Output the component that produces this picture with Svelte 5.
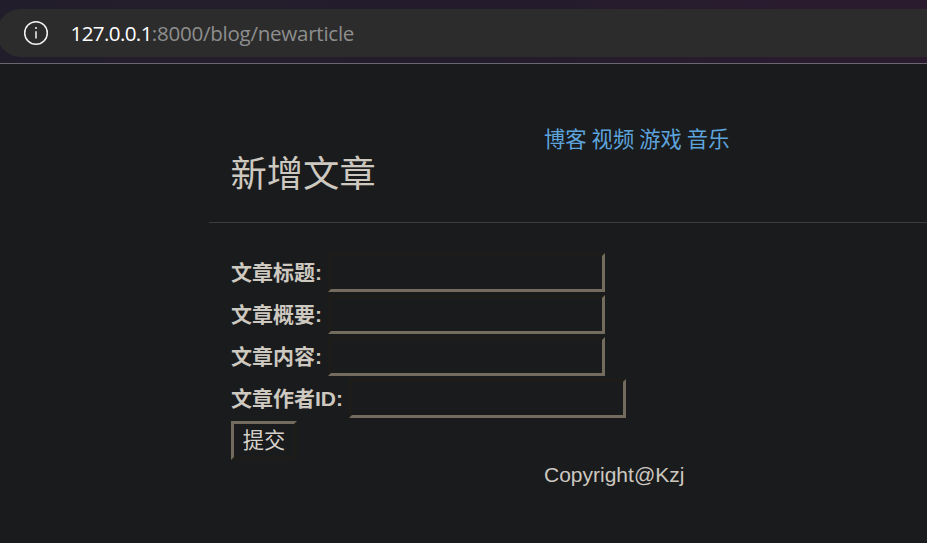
<script>
  const links = ['博客', '视频', '游戏', '音乐'];
  const fields = [
    { id: 'title', label: '文章标题:' },
    { id: 'summary', label: '文章概要:' },
    { id: 'content', label: '文章内容:' },
    { id: 'author', label: '文章作者ID:', wide: true }
  ];
</script>

<div class="window">
  <header class="toolbar">
    <div class="address">
      <svg class="info" width="26" height="26" viewBox="0 0 26 26" fill="none" aria-hidden="true">
        <circle cx="13" cy="13" r="11.3" stroke="#f4f4f4" stroke-width="1.5" />
        <path d="M13 11.3v7.2" stroke="#e6e6e6" stroke-width="1.6" />
        <circle cx="13" cy="8" r="1.1" fill="#e6e6e6" />
      </svg>
      <span class="url"><span class="host">127.0.0.1</span><span class="path">:8000/blog/newarticle</span></span>
    </div>
  </header>
  <main>
    <nav>
      {#each links as link}<a href="#top">{link}</a>{/each}
    </nav>
    <h1>新增文章</h1>
    <form onsubmit={(e) => e.preventDefault()}>
      {#each fields as f}
        <div class="row">
          <label for={f.id} class:wide={f.wide}>{f.label}</label>
          <input id={f.id} type="text" />
        </div>
      {/each}
      <button type="submit">提交</button>
    </form>
    <footer>Copyright@Kzj</footer>
  </main>
</div>

<style>
  :global(body) {
    margin: 0;
    background: #1a1b1c;
  }
  .window {
    width: 927px;
    height: 543px;
    overflow: hidden;
    background: #1a1b1c;
    color: #cdc8c0;
    font-family: 'Liberation Sans', 'Noto Sans CJK SC', sans-serif;
    font-size: 21px;
  }
  .toolbar {
    box-sizing: border-box;
    height: 64px;
    padding-top: 9px;
    background: linear-gradient(90deg, #221d2b 0%, #241c2d 60%, #2a1b2f 85%);
    border-bottom: 1px solid #6b676e;
  }
  .address {
    box-sizing: border-box;
    height: 48px;
    margin-left: -3px;
    padding-left: 26px;
    display: flex;
    align-items: center;
    border-radius: 24px 0 0 24px;
    background: #2c2c2c;
  }
  .url {
    margin-left: 21.5px;
    padding-bottom: 1px;
    font-family: 'Open Sans', 'Noto Sans', sans-serif;
    font-size: 20.6px;
    line-height: 28px;
    white-space: nowrap;
  }
  .host {
    color: #fff;
    letter-spacing: -0.62px;
  }
  .path {
    color: #8e8e8e;
    letter-spacing: -0.28px;
  }
  nav {
    display: flex;
    box-sizing: border-box;
    height: 90px;
    gap: 5px;
    padding: 60px 0 0 544px;
    line-height: 32px;
  }
  a {
    color: #5da3dc;
    font-size: 21.3px;
    font-weight: 400;
    text-decoration: none;
  }
  h1 {
    box-sizing: border-box;
    height: 69px;
    margin: 0 0 0 209px;
    padding-left: 21.5px;
    border-bottom: 1px solid #3a3d3f;
    font-size: 36.3px;
    font-weight: 400;
    line-height: 42px;
  }
  form {
    padding: 30px 0 0 231px;
  }
  .row {
    display: flex;
    height: 42px;
  }
  label {
    width: 97px;
    flex: none;
    font-weight: 700;
    line-height: 39px;
    white-space: nowrap;
  }
  .wide {
    width: 118px;
  }
  input {
    box-sizing: border-box;
    width: 277px;
    height: 39px;
    margin: 0;
    padding: 2px 4px;
    border: 3px solid;
    border-color: #1e1c18 #736b5e #736b5e #1e1c18;
    border-radius: 0;
    outline: none;
    background: #1a1b1c;
    color: inherit;
    font: inherit;
  }
  button {
    display: block;
    box-sizing: border-box;
    width: 66px;
    height: 39px;
    margin: 0;
    padding: 2px 0 0;
    border: 3px solid;
    border-color: #736b5e #1e1c18 #1e1c18 #736b5e;
    border-radius: 0;
    background: #1a1b1c;
    color: #d6d2cb;
    font: inherit;
    font-size: 21.3px;
    line-height: 31px;
  }
  footer {
    padding: 0 0 0 544px;
    line-height: 30px;
  }
</style>
